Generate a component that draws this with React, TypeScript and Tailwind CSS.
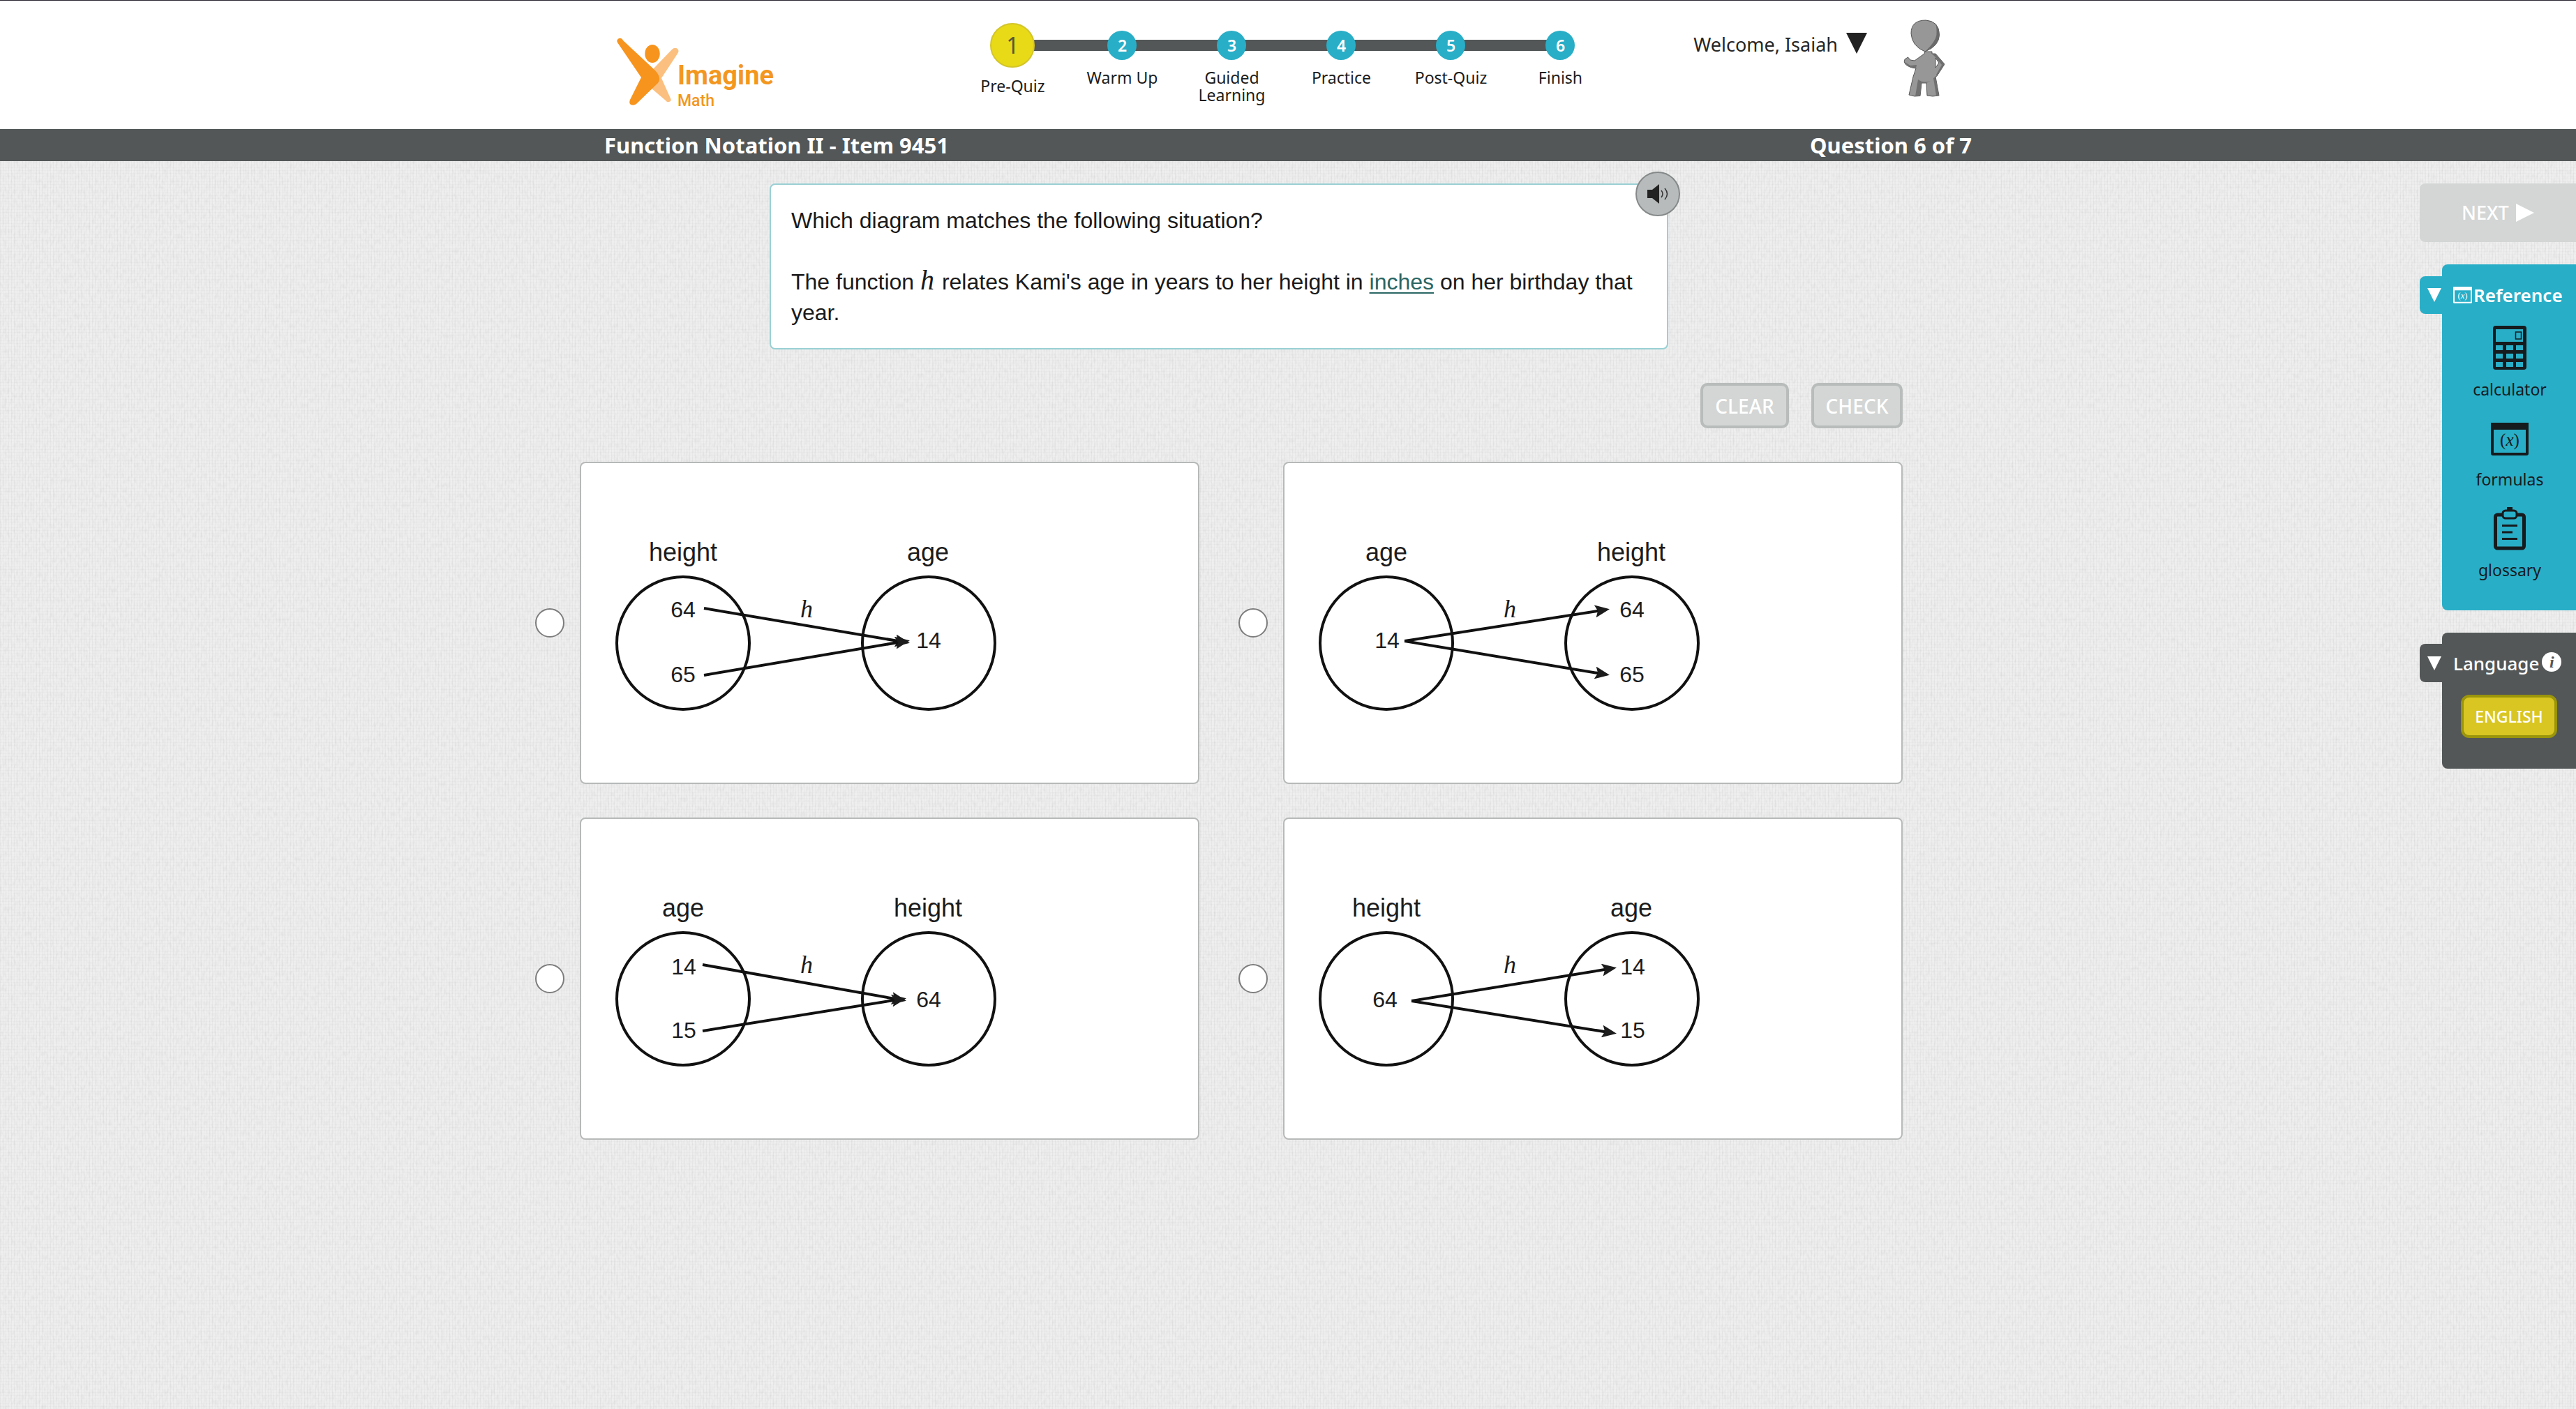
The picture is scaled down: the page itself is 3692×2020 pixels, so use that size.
import { useState } from "react";

const steps = ["Pre-Quiz", "Warm Up", "Guided Learning", "Practice", "Post-Quiz", "Finish"];

interface DiagramText {
  text: string;
  x: number;
  y: number;
}

interface Diagram {
  id: string;
  domain: string;
  range: string;
  numbers: DiagramText[];
  arrows: [number, number, number, number][];
}

const diagrams: Diagram[] = [
  {
    id: "a",
    domain: "height",
    range: "age",
    numbers: [
      { text: "64", x: 146, y: 223 },
      { text: "65", x: 146, y: 316 },
      { text: "14", x: 498, y: 267 },
    ],
    arrows: [
      [176, 210, 471, 259],
      [176, 306, 471, 257],
    ],
  },
  {
    id: "b",
    domain: "age",
    range: "height",
    numbers: [
      { text: "14", x: 147, y: 267 },
      { text: "64", x: 498, y: 223 },
      { text: "65", x: 498, y: 316 },
    ],
    arrows: [
      [172, 257, 466, 212],
      [172, 257, 466, 305],
    ],
  },
  {
    id: "c",
    domain: "age",
    range: "height",
    numbers: [
      { text: "14", x: 147, y: 225 },
      { text: "15", x: 147, y: 316 },
      { text: "64", x: 498, y: 272 },
    ],
    arrows: [
      [174, 211, 466, 262],
      [174, 306, 466, 260],
    ],
  },
  {
    id: "d",
    domain: "height",
    range: "age",
    numbers: [
      { text: "64", x: 144, y: 272 },
      { text: "14", x: 499, y: 225 },
      { text: "15", x: 499, y: 316 },
    ],
    arrows: [
      [182, 263, 476, 216],
      [182, 263, 476, 309],
    ],
  },
];

function Logo() {
  return (
    <div className="flex text-[#f3971f] font-[Roboto,sans-serif]">
      <svg width="87" height="100" viewBox="0 0 87 100" className="overflow-visible" aria-hidden="true">
        <path
          d="M53 44 L79 17 Q83 13 87 16 Q90 19 87 23 L64 58 L77 87 Q79 91 75 92 Q72 93 70 90 L50 73 Z"
          fill="#fbc07f"
        />
        <path
          d="M1 7 Q-1 3 3 1 Q7 0 9 4 L54 46 Q65 57 59 65 L28 95 Q24 98 20 96 Q17 94 19 89 L35 57 Z"
          fill="#f7941d"
        />
        <ellipse cx="51" cy="23" rx="10.7" ry="13" fill="#f7941d" />
      </svg>
      <div className="flex flex-col pt-[34px]">
        <span className="text-[38px] leading-10 font-bold">Imagine</span>
        <span className="text-[23px] leading-[34px] font-medium">Math</span>
      </div>
    </div>
  );
}

function Avatar() {
  return (
    <svg width="62" height="112" viewBox="0 0 62 112" stroke="#555" strokeWidth="1" aria-hidden="true">
      <path
        d="M31 46 L41 46 L41 49 L46 49 L59 64 L48 81 L46 82 L51 109 L42 110 L34 109 L33 91 L26 91 L24 109.5 L16 110 L8 108 L14 82 L18 70 Q8 69 3 64 Q0 61 2 57 L6.5 54 L10 58 L16 59 L30 49 Z"
        fill="#979797"
      />
      <path d="M41 49 L46 49 L59 64 L48 81 L47 79 L55 65 L45 53 Z" fill="#6f6f6f" stroke="none" />
      <path d="M2 61 L10 66 L19 65 L18 70 Q6 69 2 61 Z" fill="#707070" stroke="none" />
      <path d="M21 86 Q29 92 39 88 L33 91 L26 91 L24 109.5 L17 110 Z" fill="#707070" stroke="none" />
      <path d="M43 84 L46 82 L51 109 L47 109 Z" fill="#707070" stroke="none" />
      <path d="M46 55 L51 62 L46 69 Z" fill="#fff" />
      <path d="M11 20 Q11 1 32 1 Q51 2 51.5 22 Q51 38 31 46 Q12 38 11 20 Z" fill="#979797" />
      <path d="M46 6 Q52 12 51.5 22 Q51 38 31 46 Q46 32 47.5 22 Q48 12 46 6 Z" fill="#6a6a6a" stroke="none" />
    </svg>
  );
}

function FormulaIcon({ className }: { className: string }) {
  return (
    <svg className={className} viewBox="0 0 54 47" aria-hidden="true">
      <rect x="2" y="2" width="50" height="43" rx="1" fill="none" stroke="currentColor" strokeWidth="4" />
      <rect width="54" height="10" fill="currentColor" />
      <text
        x="27"
        y="33"
        textAnchor="middle"
        fill="currentColor"
        className="font-['Liberation_Serif',serif] text-[25px] font-normal"
      >
        (<tspan fontStyle="italic">x</tspan>)
      </text>
    </svg>
  );
}

function CalculatorIcon() {
  return (
    <svg width="48" height="63" viewBox="0 0 48 63" aria-hidden="true">
      <rect width="48" height="63" rx="4" fill="#161b1d" />
      <rect x="4" y="5" width="39" height="18" fill="#29aec7" />
      <rect x="32.5" y="9" width="8" height="10" fill="none" stroke="#161b1d" strokeWidth="1.5" />
      {[28, 40, 52].map((y) =>
        [4, 19, 33].map((x) => <rect key={`${x}-${y}`} x={x} y={y} width="10" height="7" fill="#29aec7" />)
      )}
    </svg>
  );
}

function ClipboardIcon() {
  return (
    <svg width="46" height="62" viewBox="0 0 46 62" fill="none" stroke="#161b1d" aria-hidden="true">
      <rect x="2.5" y="11" width="41" height="48" rx="3" strokeWidth="5" />
      <rect x="13" y="5" width="20" height="11" rx="4" fill="#29aec7" strokeWidth="3" />
      <path d="M19 2.5 H27" strokeWidth="5" />
      <path d="M12 26.5 H34 M12 36 H27 M12 45.5 H34" strokeWidth="3" />
    </svg>
  );
}

function Header() {
  return (
    <header className="border-t border-[#2a2630] bg-white">
      <div className="mx-auto flex h-[184px] max-w-[1960px] items-start pr-9 pl-[18px]">
        <div className="pt-[53px]">
          <Logo />
        </div>
        <ol className="ml-[264px] flex pt-8">
          {steps.map((step, idx) => (
            <li key={step} className="relative flex w-[157px] flex-col items-center text-center text-[#1d1d1d]">
              {idx < steps.length - 1 && <span className="absolute top-6 left-1/2 h-4 w-full bg-[#535757]" />}
              <div className="relative flex h-16 items-center">
                {idx === 0 ? (
                  <span className="flex size-16 items-center justify-center rounded-full border-2 border-[#d3c52a] bg-[#e8da17] text-[32px] text-[#55563c]">
                    1
                  </span>
                ) : (
                  <span className="flex size-[42px] items-center justify-center rounded-full bg-[#29aec7] text-[23px] font-semibold text-white">
                    {idx + 1}
                  </span>
                )}
              </div>
              <span className={idx === 0 ? "mt-3.5 text-[23px] leading-[25px]" : "mt-0.5 max-w-[120px] text-[23px] leading-[25px]"}>
                {step}
              </span>
            </li>
          ))}
        </ol>
        <div className="ml-auto flex items-start gap-[52px] pt-[27px]">
          <button className="flex items-center gap-3 pt-4 text-[27px] leading-10 text-[#262626]">
            Welcome, Isaiah
            <svg width="30" height="30" viewBox="0 0 30 30" className="mb-1" aria-hidden="true">
              <path d="M0 0 H30 L15 30 Z" fill="#222" />
            </svg>
          </button>
          <Avatar />
        </div>
      </div>
      <div className="bg-[#535757] text-white">
        <div className="mx-auto flex max-w-[1960px] justify-between text-[31px] leading-[46px] font-bold">
          <h1>Function Notation II - Item 9451</h1>
          <p>Question 6 of 7</p>
        </div>
      </div>
    </header>
  );
}

function Question() {
  return (
    <section className="relative mx-auto max-w-[1288px] rounded-lg border-2 border-[#9ad0d4] bg-white p-[29px] font-['Liberation_Sans',Arial,sans-serif] text-[32px] leading-[44px] text-[#1a1a1a]">
      <p>Which diagram matches the following situation?</p>
      <p className="mt-11">
        The function <i className="mr-0.5 font-['Liberation_Serif',serif] text-[40px] leading-none">h</i> relates Kami's
        age in years to her height in{" "}
        <a href="#inches" className="text-[#2a6664] underline decoration-2 underline-offset-4">
          inches
        </a>{" "}
        on her birthday that year.
      </p>
      <button
        aria-label="Read aloud"
        className="absolute -top-[19px] -right-[19px] flex size-16 items-center justify-center rounded-full border-2 border-[#858989] bg-[#b7bbbb]"
      >
        <svg width="30" height="30" viewBox="0 0 30 30" fill="none" stroke="#333" aria-hidden="true">
          <path d="M0 9 H7 L17 1 V29 L7 21 H0 Z" fill="#222" stroke="none" />
          <path d="M20 10 Q24 15 20 20 M25 7 Q32 15 25 23" strokeWidth="1.5" />
        </svg>
      </button>
    </section>
  );
}

function MappingDiagram({ diagram }: { diagram: Diagram }) {
  return (
    <svg
      viewBox="0 2 620 458"
      className="w-[620px] max-w-full font-['Liberation_Sans',Arial,sans-serif]"
      textAnchor="middle"
      fill="#1c1c1c"
      role="img"
      aria-label={`${diagram.domain} to ${diagram.range}`}
    >
      <defs>
        <marker
          id={`head-${diagram.id}`}
          markerUnits="userSpaceOnUse"
          markerWidth="22"
          markerHeight="18"
          refX="16"
          refY="9"
          orient="auto"
        >
          <path d="M0 0 L21 9 L0 18 L4 9 Z" />
        </marker>
      </defs>
      <g fill="none" stroke="#111" strokeWidth="4">
        <circle cx="146" cy="260" r="95" />
        <circle cx="498" cy="260" r="95" />
        {diagram.arrows.map(([x1, y1, x2, y2], idx) => (
          <line key={idx} x1={x1} y1={y1} x2={x2 - 5} y2={y2} markerEnd={`url(#head-${diagram.id})`} />
        ))}
      </g>
      <g className="text-[36px]">
        <text x="146" y="142">{diagram.domain}</text>
        <text x="497" y="142">{diagram.range}</text>
      </g>
      <text x="323" y="223" className="font-['Liberation_Serif',serif] text-[36px] italic">
        h
      </text>
      <g className="text-[32px]">
        {diagram.numbers.map((n) => (
          <text key={n.text} x={n.x} y={n.y}>{n.text}</text>
        ))}
      </g>
    </svg>
  );
}

function SideTab({ label, className }: { label: string; className: string }) {
  return (
    <button aria-label={label} className={className}>
      <svg width="20" height="20" viewBox="0 0 20 20" aria-hidden="true">
        <path d="M0 0 H20 L10 20 Z" fill="#fff" />
      </svg>
    </button>
  );
}

function Sidebar() {
  return (
    <aside className="w-56 shrink-0">
      <button
        disabled
        className="flex h-[84px] w-full items-center gap-2.5 rounded-l-lg bg-[#d3d6d5] pl-[60px] text-[27px] font-medium text-white"
      >
        NEXT
        <svg width="26" height="26" viewBox="0 0 26 26" aria-hidden="true">
          <path d="M0 0 L26 13 L0 26 Z" fill="#fff" />
        </svg>
      </button>

      <section className="relative mt-8 ml-8 h-[496px] rounded-l-lg bg-[#29aec7] pt-6">
        <SideTab
          label="Collapse reference"
          className="absolute top-[17px] -left-8 flex h-[54px] w-9 items-center rounded-l-lg bg-[#29aec7] pl-[11px]"
        />
        <h2 className="flex items-center gap-0.5 pl-4 text-[26px] leading-10 font-semibold text-white">
          <FormulaIcon className="h-6 w-[27px]" />
          Reference
        </h2>
        <ul className="mt-6 pl-0.5 text-center text-[23px] text-[#161b1d]">
          <li>
            <button className="flex h-[129px] w-full flex-col items-center">
              <CalculatorIcon />
              <span className="mt-2.5 leading-9">calculator</span>
            </button>
          </li>
          <li>
            <button className="flex h-[129px] w-full flex-col items-center pt-2.5">
              <FormulaIcon className="h-[47px] w-[54px]" />
              <span className="mt-4 leading-9">formulas</span>
            </button>
          </li>
          <li>
            <button className="flex h-[129px] w-full flex-col items-center pt-0.5">
              <ClipboardIcon />
              <span className="mt-2.5 leading-9">glossary</span>
            </button>
          </li>
        </ul>
      </section>

      <section className="relative mt-8 ml-8 h-[195px] rounded-l-lg bg-[#535757] pt-6">
        <SideTab
          label="Collapse language"
          className="absolute top-4 -left-8 flex h-[55px] w-9 items-center rounded-l-lg bg-[#535757] pl-[11px]"
        />
        <h2 className="flex items-center gap-1 pl-4 text-[26px] leading-10 font-medium text-white">
          Language
          <span className="mb-1 flex size-7 items-center justify-center rounded-full bg-white font-['Liberation_Serif',serif] text-[24px] leading-none font-bold text-[#535757] italic">
            i
          </span>
        </h2>
        <button className="mx-auto mt-[25px] flex h-[62px] w-[138px] items-center justify-center rounded-xl border-4 border-[#9b950c] bg-[#d9c623] text-[23px] font-medium text-white">
          ENGLISH
        </button>
      </section>
    </aside>
  );
}

export default function App() {
  const [answer, setAnswer] = useState("");

  return (
    <div className="relative isolate flex min-h-screen flex-col bg-[#efefef] font-['Noto_Sans',sans-serif]">
      {/* Linen grain behind the page */}
      <svg className="absolute inset-0 -z-10 size-full" aria-hidden="true">
        <filter id="linen">
          <feTurbulence type="fractalNoise" baseFrequency="0.3 0.14" numOctaves="2" seed="4" />
          <feColorMatrix values="0 0 0 0 0.5  0 0 0 0 0.5  0 0 0 0 0.5  0.4 0 0 0 -0.16" />
        </filter>
        <pattern id="weave" width="4" height="4" patternUnits="userSpaceOnUse">
          <path d="M0 0 V4" stroke="#000" strokeOpacity="0.03" strokeWidth="2" />
          <path d="M0 0 H4" stroke="#000" strokeOpacity="0.015" strokeWidth="2" />
        </pattern>
        <rect width="100%" height="100%" filter="url(#linen)" />
        <rect width="100%" height="100%" fill="url(#weave)" />
      </svg>

      <Header />

      <div className="flex flex-1 items-start pt-8">
        <main className="flex-1 pl-[26px]">
          <div className="mx-auto max-w-[1960px]">
            <Question />

            <div className="mt-12 flex justify-end gap-8 text-[28px] font-medium text-white">
              <button
                onClick={() => setAnswer("")}
                className="flex h-[65px] w-[127px] items-center justify-center rounded-[10px] border-4 border-[#b8bcbb] bg-[#d3d6d5]"
              >
                CLEAR
              </button>
              <button className="flex h-[65px] w-[131px] items-center justify-center rounded-[10px] border-4 border-[#b8bcbb] bg-[#d3d6d5]">
                CHECK
              </button>
            </div>

            <div className="mt-12 grid grid-cols-2 gap-x-14 gap-y-12">
              {diagrams.map((diagram) => (
                <label key={diagram.id} className="flex items-center gap-[22px]">
                  <input
                    type="radio"
                    name="answer"
                    value={diagram.id}
                    checked={answer === diagram.id}
                    onChange={() => setAnswer(diagram.id)}
                    className="size-[42px] shrink-0 appearance-none rounded-full border-2 border-[#7d7d7d] bg-white checked:border-[12px]"
                  />
                  <div className="flex-1 rounded-lg border-2 border-[#b7b9b9] bg-white">
                    <MappingDiagram diagram={diagram} />
                  </div>
                </label>
              ))}
            </div>
          </div>
        </main>
        <Sidebar />
      </div>
    </div>
  );
}
